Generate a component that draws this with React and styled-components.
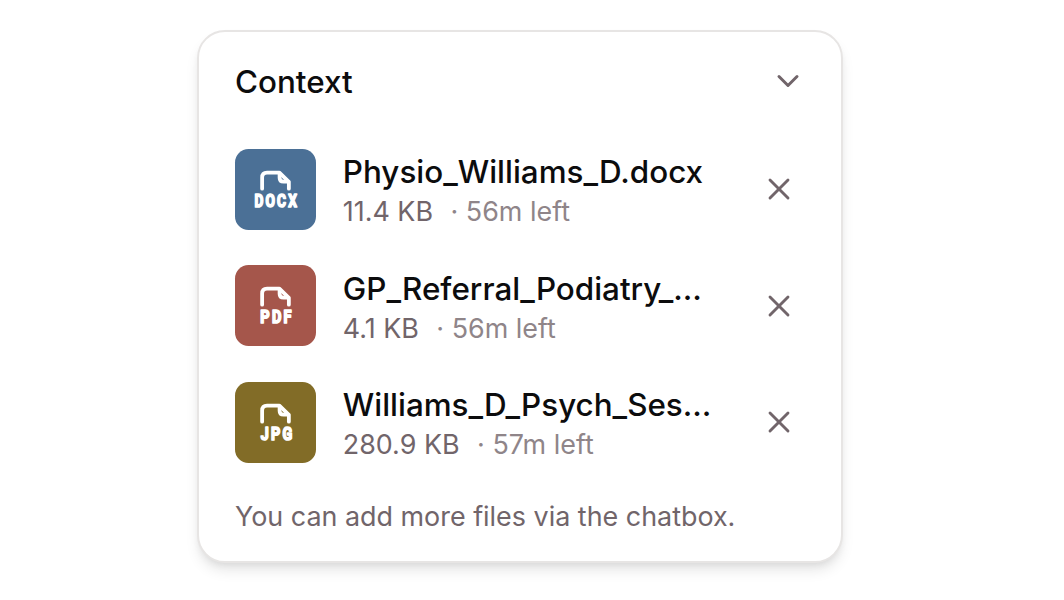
import React from 'react';
import styled, { createGlobalStyle } from 'styled-components';
import { ChevronDown, X } from 'lucide-react';

const GlobalStyle = createGlobalStyle`
  * {
    box-sizing: border-box;
  }

  body {
    margin: 0;
    background: #ffffff;
    font-family: Inter, 'Liberation Sans', sans-serif;
    color: #0c0c0d;
  }
`;

const Page = styled.main`
  display: flex;
  align-items: flex-start;
  height: 600px;
  padding: 30px 0 0 197px;
  overflow: hidden;
`;

const Card = styled.section`
  width: 646px;
  height: 533px;
  padding: 29px 35.5px 0 36px;
  border: 2px solid #e7e5e4;
  border-radius: 28px;
  background: #ffffff;
  box-shadow:
    0 9px 13.5px -2.25px rgba(0, 0, 0, 0.1),
    0 4.5px 9px -4.5px rgba(0, 0, 0, 0.1);
`;

const Header = styled.header`
  display: flex;
  align-items: center;
  justify-content: space-between;
  height: 42px;
`;

const Title = styled.h2`
  margin: 0;
  font-size: 31.4px;
  font-weight: 500;
  line-height: 42px;
`;

const IconButton = styled.button`
  display: flex;
  flex: none;
  align-items: center;
  justify-content: center;
  width: ${({ $size }) => $size}px;
  height: ${({ $size }) => $size}px;
  padding: 0;
  border: 0;
  background: transparent;
  color: #71656a;
  cursor: pointer;
`;

const CollapseButton = styled(IconButton)`
  padding-bottom: 2px;

  svg {
    flex: none;
  }
`;

const FileList = styled.ul`
  display: flex;
  flex-direction: column;
  gap: 35.8px;
  margin: 45.8px 0 0;
  padding: 0;
  list-style: none;
`;

const FileRow = styled.li`
  display: flex;
  align-items: center;
  gap: 27px;
  height: 80.8px;
`;

const FileTile = styled.div`
  flex: none;
  width: 80.8px;
  height: 80.8px;
  border-radius: 13.5px;
  background: ${({ $color }) => $color};
`;

const TileIcon = styled.svg`
  display: block;
  width: 100%;
  height: 100%;

  text {
    font-family: Roboto, 'Liberation Sans', sans-serif;
    font-size: 18px;
    font-weight: 700;
    letter-spacing: 2.8px;
  }
`;

const FileInfo = styled.div`
  flex: 1;
  min-width: 0;
  white-space: nowrap;
`;

const FileName = styled.div`
  font-size: 31.4px;
  font-weight: 500;
  line-height: 46px;
`;

const FileMeta = styled.div`
  display: flex;
  gap: 17.5px;
  padding-bottom: 2px;
  font-size: 26.9px;
  line-height: 32px;
  color: #71656a;
`;

const TimeLeft = styled.span`
  color: #8f8589;
`;

const Hint = styled.p`
  margin: 35.2px 0 0;
  font-size: 26.9px;
  line-height: 36px;
  color: #71656a;
`;

const FILES = [
  { name: 'Physio_Williams_D.docx', size: '11.4 KB', left: '56m left', type: 'DOCX', color: '#4b7096', x: 19.6, width: 44.5 },
  { name: 'GP_Referral_Podiatry_…', size: '4.1 KB', left: '56m left', type: 'PDF', color: '#a5564b', x: 25.4, width: 33.5 },
  { name: 'Williams_D_Psych_Ses…', size: '280.9 KB', left: '57m left', type: 'JPG', color: '#826c27', x: 25.8, width: 33.8 },
];

function FileTypeIcon({ type, x, width }) {
  return (
    <TileIcon viewBox="0 0 81 81" aria-hidden="true">
      <g fill="none" stroke="#fff" strokeWidth="3.8" strokeLinecap="round" strokeLinejoin="round">
        <path d="M27.2 39.8V28.5Q27.2 23.6 32.1 23.6H44.5L54 33V39.8" />
        <path d="M44.7 24.5V28.7Q44.7 32.7 48.7 32.7H53" />
      </g>
      <text
        x={x}
        y="58.2"
        textLength={width}
        lengthAdjust="spacingAndGlyphs"
        fill="#fff"
        stroke="#fff"
        strokeWidth="1.7"
        strokeLinejoin="round"
      >
        {type}
      </text>
    </TileIcon>
  );
}

export default function App() {
  return (
    <>
      <GlobalStyle />
      <Page>
        <Card>
          <Header>
            <Title>Context</Title>
            <CollapseButton type="button" $size={36} aria-label="Collapse">
              <ChevronDown size={36} strokeWidth={2} />
            </CollapseButton>
          </Header>
          <FileList>
            {FILES.map((file) => (
              <FileRow key={file.name}>
                <FileTile $color={file.color}>
                  <FileTypeIcon type={file.type} x={file.x} width={file.width} />
                </FileTile>
                <FileInfo>
                  <FileName>{file.name}</FileName>
                  <FileMeta>
                    <span>{file.size}</span>
                    <TimeLeft>· {file.left}</TimeLeft>
                  </FileMeta>
                </FileInfo>
                <IconButton type="button" $size={54} aria-label={`Remove ${file.name}`}>
                  <X size={36} strokeWidth={1.9} />
                </IconButton>
              </FileRow>
            ))}
          </FileList>
          <Hint>You can add more files via the chatbox.</Hint>
        </Card>
      </Page>
    </>
  );
}
